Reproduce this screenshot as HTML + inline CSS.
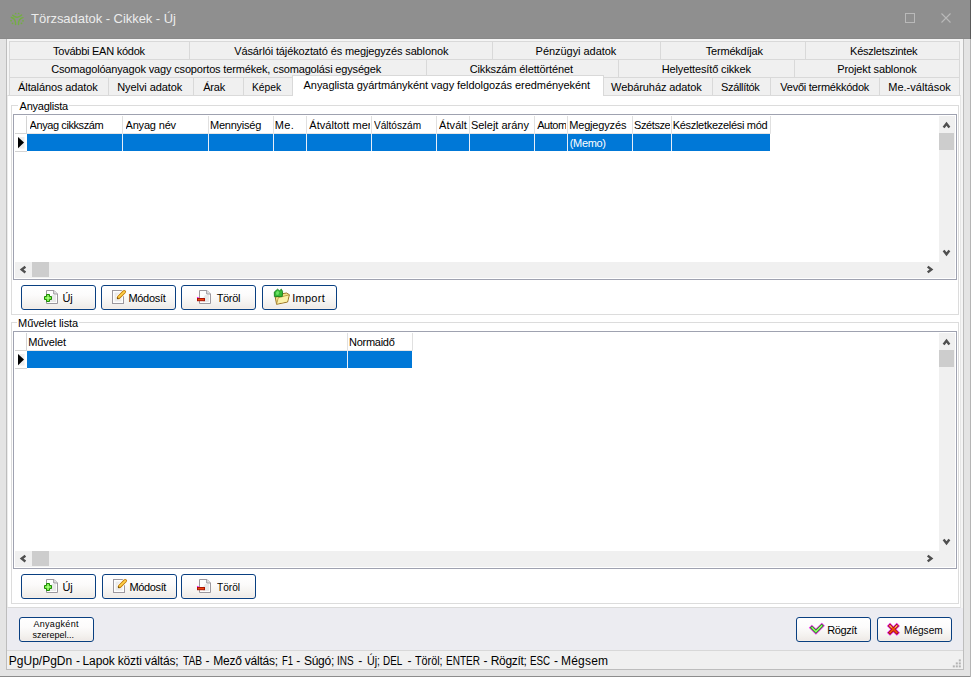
<!DOCTYPE html>
<html><head><meta charset="utf-8"><title>Törzsadatok - Cikkek - Új</title>
<style>
html,body{margin:0;padding:0}
body{width:971px;height:677px;position:relative;overflow:hidden;background:#e4e4e4;font-family:"Liberation Sans",sans-serif}
.a,.t,.tab,.btn,.hl,.vl{position:absolute}
.t{white-space:nowrap}
.tab{background:#f0f0f0;border-left:1px solid #d9d9d9;border-top:1px solid #d9d9d9;height:17px;box-sizing:content-box}
.btn{box-sizing:border-box;width:75px;height:25px;border:1px solid #093f81;border-radius:3px;background:linear-gradient(to bottom,#ffffff 0%,#fcfbfb 40%,#f4f2ef 75%,#efebe8 94%,#f8f1e8 100%)}
.hl{height:1px}.vl{width:1px}
svg{position:absolute;overflow:visible}
</style></head><body>
<!-- title bar -->
<div class="a" style="left:0;top:0;width:971px;height:39px;background:#8f8f8f"></div>
<div class="a" style="left:0;top:38px;width:971px;height:1px;background:#8a8a8a"></div>
<div class="a" style="left:970px;top:0;width:1px;height:39px;background:#5a5a5a"></div>
<svg style="left:0;top:0" width="40" height="39"><g fill="none" stroke="#74ae42" stroke-width="1.4" stroke-linecap="round">
<path d="M12.7 15.2 Q17.1 19.3 21.6 15.1"/><path d="M11.3 17.5 Q15.8 18.3 15.6 24.5"/><path d="M23 17.6 Q18.3 18.5 18.5 24.6"/></g>
<g fill="#74ae42"><circle cx="15.6" cy="13.5" r="0.85"/><circle cx="18.6" cy="13.5" r="0.85"/><circle cx="11.1" cy="20.7" r="0.9"/><circle cx="12.5" cy="23.3" r="0.9"/><circle cx="23" cy="20.8" r="0.9"/><circle cx="21.5" cy="23.3" r="0.9"/></g></svg>
<svg style="left:0;top:0" width="971" height="39"><rect x="905.5" y="13.5" width="9" height="9" fill="none" stroke="#b9b9b9" stroke-width="1"/>
<path d="M941.5 13.5 L950.5 22.5 M950.5 13.5 L941.5 22.5" stroke="#b9b9b9" stroke-width="1.1" fill="none"/></svg>
<!-- window frame -->
<div class="a" style="left:6px;top:39px;width:958px;height:631px;background:#bdbdbd"></div>
<div class="a" style="left:7px;top:39px;width:956px;height:630px;background:#f5f5f5"></div>
<div class="a" style="left:0;top:676px;width:971px;height:1px;background:#8c8c8c"></div>
<div class="a" style="left:970px;top:39px;width:1px;height:638px;background:#b4b4b4"></div>
<!-- bottom panel -->
<div class="a" style="left:7px;top:608px;width:956px;height:42px;background:#ececf1"></div>
<div class="a" style="left:7px;top:650px;width:956px;height:1px;background:#d8d8d8"></div>
<div class="a" style="left:7px;top:651px;width:956px;height:18px;background:#f0f0f0"></div>
<!-- tabs -->
<div class="a" style="left:9px;top:41px;width:950px;height:54px;background:#f0f0f0"></div>
<div class="tab" style="left:9px;top:41px;width:179px"></div><div class="tab" style="left:189px;top:41px;width:302px"></div><div class="tab" style="left:492px;top:41px;width:167px"></div><div class="tab" style="left:660px;top:41px;width:144px"></div><div class="tab" style="left:805px;top:41px;width:153px;border-right:1px solid #d9d9d9"></div>
<div class="tab" style="left:9px;top:59px;width:416px"></div><div class="tab" style="left:426px;top:59px;width:191px"></div><div class="tab" style="left:618px;top:59px;width:175px"></div><div class="tab" style="left:794px;top:59px;width:164px;border-right:1px solid #d9d9d9"></div>
<div class="tab" style="left:9px;top:77px;width:98px"></div><div class="tab" style="left:108px;top:77px;width:84px"></div><div class="tab" style="left:193px;top:77px;width:49px"></div><div class="tab" style="left:243px;top:77px;width:49px"></div><div class="tab" style="left:603px;top:77px;width:108px"></div><div class="tab" style="left:712px;top:77px;width:57px"></div><div class="tab" style="left:770px;top:77px;width:108px"></div><div class="tab" style="left:879px;top:77px;width:79px;border-right:1px solid #d9d9d9"></div>
<!-- page -->
<div class="a" style="left:7px;top:95px;width:954px;height:513px;box-sizing:border-box;border:1px solid #dadada;border-left-color:#ebebeb;border-right-color:#e6e6e6;background:#fff"></div>
<!-- active tab -->
<div class="a" style="left:292px;top:75px;width:312px;height:21px;box-sizing:border-box;border:1px solid #d9d9d9;border-bottom:none;background:#fff"></div>
<!-- group boxes -->
<div class="a" style="left:11px;top:105px;width:948px;height:210px;box-sizing:border-box;border:1px solid #dcdcdc"></div>
<div class="a" style="left:18px;top:100px;width:51px;height:12px;background:#fff"></div>
<div class="a" style="left:11px;top:322px;width:948px;height:282px;box-sizing:border-box;border:1px solid #dcdcdc"></div>
<div class="a" style="left:17px;top:317px;width:62px;height:12px;background:#fff"></div>
<!-- grid 1 -->
<div class="a" style="left:13px;top:114px;width:944px;height:166px;box-sizing:border-box;border:1px solid #9fa2b0;background:#fff"></div>
<div class="a" style="left:939px;top:116px;width:16px;height:162px;background:#f0f0f0"></div>
<div class="a" style="left:15px;top:262px;width:940px;height:16px;background:#f0f0f0"></div>
<div class="a" style="left:939px;top:133px;width:15px;height:17px;background:#cdcdcd"></div>
<div class="a" style="left:32px;top:262px;width:17px;height:15px;background:#cdcdcd"></div>
<div class="hl" style="left:15px;top:133px;width:12px;background:#d4d4d4"></div>
<div class="hl" style="left:27px;top:133px;width:744px;background:#e6e6e6"></div>
<div class="hl" style="left:15px;top:151px;width:12px;background:#d4d4d4"></div>
<div class="a" style="left:27px;top:134px;width:743px;height:17px;background:#0078d7"></div>
<div class="vl" style="left:26px;top:116px;height:17px;background:#d4d4d4"></div><div class="vl" style="left:122px;top:116px;height:17px;background:#e0e0e0"></div><div class="vl" style="left:122px;top:134px;height:17px;background:#e8eef8"></div><div class="vl" style="left:208px;top:116px;height:17px;background:#e0e0e0"></div><div class="vl" style="left:208px;top:134px;height:17px;background:#e8eef8"></div><div class="vl" style="left:273px;top:116px;height:17px;background:#e0e0e0"></div><div class="vl" style="left:273px;top:134px;height:17px;background:#e8eef8"></div><div class="vl" style="left:306px;top:116px;height:17px;background:#e0e0e0"></div><div class="vl" style="left:306px;top:134px;height:17px;background:#e8eef8"></div><div class="vl" style="left:371px;top:116px;height:17px;background:#e0e0e0"></div><div class="vl" style="left:371px;top:134px;height:17px;background:#e8eef8"></div><div class="vl" style="left:436px;top:116px;height:17px;background:#e0e0e0"></div><div class="vl" style="left:436px;top:134px;height:17px;background:#e8eef8"></div><div class="vl" style="left:469px;top:116px;height:17px;background:#e0e0e0"></div><div class="vl" style="left:469px;top:134px;height:17px;background:#e8eef8"></div><div class="vl" style="left:534px;top:116px;height:17px;background:#e0e0e0"></div><div class="vl" style="left:534px;top:134px;height:17px;background:#e8eef8"></div><div class="vl" style="left:567px;top:116px;height:17px;background:#e0e0e0"></div><div class="vl" style="left:567px;top:134px;height:17px;background:#e8eef8"></div><div class="vl" style="left:632px;top:116px;height:17px;background:#e0e0e0"></div><div class="vl" style="left:632px;top:134px;height:17px;background:#e8eef8"></div><div class="vl" style="left:671px;top:116px;height:17px;background:#e0e0e0"></div><div class="vl" style="left:671px;top:134px;height:17px;background:#e8eef8"></div><div class="vl" style="left:770px;top:116px;height:17px;background:#e0e0e0"></div>
<!-- grid 2 -->
<div class="a" style="left:13px;top:331px;width:944px;height:238px;box-sizing:border-box;border:1px solid #9fa2b0;background:#fff"></div>
<div class="a" style="left:939px;top:333px;width:16px;height:234px;background:#f0f0f0"></div>
<div class="a" style="left:15px;top:551px;width:940px;height:16px;background:#f0f0f0"></div>
<div class="a" style="left:939px;top:350px;width:15px;height:17px;background:#cdcdcd"></div>
<div class="a" style="left:32px;top:551px;width:17px;height:15px;background:#cdcdcd"></div>
<div class="hl" style="left:15px;top:350px;width:12px;background:#d4d4d4"></div>
<div class="hl" style="left:27px;top:350px;width:386px;background:#e6e6e6"></div>
<div class="hl" style="left:15px;top:368px;width:12px;background:#d4d4d4"></div>
<div class="a" style="left:27px;top:351px;width:385px;height:17px;background:#0078d7"></div>
<div class="vl" style="left:26px;top:333px;height:17px;background:#d4d4d4"></div>
<div class="vl" style="left:347px;top:333px;height:17px;background:#e0e0e0"></div><div class="vl" style="left:347px;top:351px;height:17px;background:#e8eef8"></div>
<div class="vl" style="left:412px;top:333px;height:17px;background:#e0e0e0"></div>
<svg style="left:0;top:0" width="971" height="677">
<rect x="18" y="137" width="6.5" height="11.5" fill="#eeeeee"/><path d="M18 137 L24 142.6 L18 148.2 Z" fill="#000"/>
<rect x="18" y="354" width="6.5" height="11.5" fill="#eeeeee"/><path d="M18 354 L24 359.6 L18 365.2 Z" fill="#000"/>
<g fill="none" stroke="#4f4f4f" stroke-width="2.4" stroke-linejoin="miter"><path d="M943.6 127.4 L946.5 123.7 L949.4 127.4"/><path d="M943.6 250.6 L946.5 254.3 L949.4 250.6"/><path d="M25.4 266.7 L21.7 269.6 L25.4 272.5"/><path d="M927.7 266.6 L931.4 269.5 L927.7 272.4"/><path d="M943.6 344.5 L946.5 340.8 L949.4 344.5"/><path d="M943.6 539.6 L946.5 543.3 L949.4 539.6"/><path d="M25.4 555.7 L21.7 558.6 L25.4 561.5"/><path d="M927.7 555.6 L931.4 558.5 L927.7 561.4"/></g></svg>
<!-- buttons -->
<div class="btn" style="left:21px;top:285px"></div><div class="btn" style="left:101px;top:285px"></div><div class="btn" style="left:181px;top:285px"></div><div class="btn" style="left:262px;top:285px"></div>
<div class="btn" style="left:21px;top:574px"></div><div class="btn" style="left:102px;top:574px"></div><div class="btn" style="left:181px;top:574px"></div>
<div class="btn" style="left:19px;top:617px"></div><div class="btn" style="left:796px;top:617px"></div><div class="btn" style="left:877px;top:617px"></div>
<svg style="left:0;top:0" width="971" height="677"><path d="M46.5 290.5 H54 L57.5 294 V303.5 H46.5 Z" fill="#fdfdfd" stroke="#9c989e" stroke-width="1"/><path d="M52 295 H56 V302 H50 V298 Z" fill="#e9e9e9" stroke="none"/><path d="M53.7 290.5 V294 H57.5" fill="#e6e6e6" stroke="#9c989e" stroke-width="1"/><path d="M46.5 294.5 H49.5 V296.5 H51.5 V299.5 H49.5 V301.5 H46.5 V299.5 H44.5 V296.5 H46.5 Z" fill="#84ef52" stroke="#1c8a04" stroke-width="1"/><rect x="47.2" y="297.2" width="1.6" height="1.6" fill="#b8ffa0"/><rect x="112.5" y="290.5" width="11" height="13" fill="#fdfdfd" stroke="#9c989e" stroke-width="1"/><rect x="114.5" y="292.5" width="7" height="9" fill="#ebebeb"/><path d="M118.6 297.4 L124.2 291.8" stroke="#fbfbfa" stroke-width="5.2" stroke-linecap="round"/><path d="M118.6 297.4 L124.2 291.8" stroke="#c27a08" stroke-width="3.6" stroke-linecap="round"/><path d="M118.8 297.2 L124.2 291.8" stroke="#ffd24a" stroke-width="1.8" stroke-linecap="round"/><circle cx="117.6" cy="298.4" r="0.8" fill="#6a5010"/><path d="M199.5 290.5 H207 L210.5 294 V303.5 H199.5 Z" fill="#fdfdfd" stroke="#9c989e" stroke-width="1"/><path d="M205 295 H209 V302 H203 V298 Z" fill="#e9e9e9" stroke="none"/><path d="M206.7 290.5 V294 H210.5" fill="#e6e6e6" stroke="#9c989e" stroke-width="1"/><rect x="197" y="297" width="1.6" height="1.2" fill="#ff20f0"/><rect x="197.5" y="298.5" width="7" height="2.2" fill="#f2480e" stroke="#a81404" stroke-width="1"/><path d="M275.2 297 L276.6 304.3 L287.6 302 L289.4 294.8 L286.6 293 L283 293.6 L282 295.6 Z" fill="#f4e58c" stroke="#9a7426" stroke-width="1" stroke-linejoin="round"/><path d="M276.6 304.3 L278.4 297.6 L289.4 294.8" fill="none" stroke="#b89446" stroke-width="0.9"/><path d="M278.8 298.2 L288.4 295.8 L287 301.4 L277.4 303.4 Z" fill="#fbf1a8"/><path d="M274.3 292 L276 290.6 L277.6 289.2 L279.4 290.8 L281.4 289.2 L282.6 291.6 L282.2 296.6 L274.4 296.6 Z" fill="#35ba36" stroke="#17801c" stroke-width="0.9" stroke-linejoin="round"/><path d="M276.2 292 L278 290.6 L279.2 292.4 L278.2 295 L276 294.6 Z" fill="#6ee266"/><path d="M46.5 579.5 H54 L57.5 583 V592.5 H46.5 Z" fill="#fdfdfd" stroke="#9c989e" stroke-width="1"/><path d="M52 584 H56 V591 H50 V587 Z" fill="#e9e9e9" stroke="none"/><path d="M53.7 579.5 V583 H57.5" fill="#e6e6e6" stroke="#9c989e" stroke-width="1"/><path d="M46.5 583.5 H49.5 V585.5 H51.5 V588.5 H49.5 V590.5 H46.5 V588.5 H44.5 V585.5 H46.5 Z" fill="#84ef52" stroke="#1c8a04" stroke-width="1"/><rect x="47.2" y="586.2" width="1.6" height="1.6" fill="#b8ffa0"/><rect x="113.5" y="579.5" width="11" height="13" fill="#fdfdfd" stroke="#9c989e" stroke-width="1"/><rect x="115.5" y="581.5" width="7" height="9" fill="#ebebeb"/><path d="M119.6 586.4 L125.2 580.8" stroke="#fbfbfa" stroke-width="5.2" stroke-linecap="round"/><path d="M119.6 586.4 L125.2 580.8" stroke="#c27a08" stroke-width="3.6" stroke-linecap="round"/><path d="M119.8 586.2 L125.2 580.8" stroke="#ffd24a" stroke-width="1.8" stroke-linecap="round"/><circle cx="118.6" cy="587.4" r="0.8" fill="#6a5010"/><path d="M199.5 579.5 H207 L210.5 583 V592.5 H199.5 Z" fill="#fdfdfd" stroke="#9c989e" stroke-width="1"/><path d="M205 584 H209 V591 H203 V587 Z" fill="#e9e9e9" stroke="none"/><path d="M206.7 579.5 V583 H210.5" fill="#e6e6e6" stroke="#9c989e" stroke-width="1"/><rect x="197" y="586" width="1.6" height="1.2" fill="#ff20f0"/><rect x="197.5" y="587.5" width="7" height="2.2" fill="#f2480e" stroke="#a81404" stroke-width="1"/><path d="M810.35 626.2 L815.9 631.65 L823.35 624.25" fill="none" stroke="#ee2aec" stroke-width="4.3" stroke-linejoin="miter" stroke-miterlimit="10"/><path d="M810.9 626.75 L815.9 631.65 L822.8 624.8" fill="none" stroke="#22881c" stroke-width="2.9" stroke-linejoin="miter" stroke-miterlimit="10"/><path d="M811.5 627.3 L815.9 631.65 L822.2 625.4" fill="none" stroke="#86f25e" stroke-width="1.5" stroke-linejoin="miter" stroke-miterlimit="10"/><path d="M812.2 627.6 L815.9 631.2 L821.6 625.6" fill="none" stroke="#d2ffc4" stroke-width="0.5" stroke-dasharray="0.9 0.7"/><path d="M888.45 624.35 L898.35 634.25 M898.35 624.35 L888.45 634.25" stroke="#ee1cec" stroke-width="4.4" fill="none"/><path d="M888.95 624.85 L897.85 633.75 M897.85 624.85 L888.95 633.75" stroke="#8e1a08" stroke-width="3.0" fill="none"/><path d="M889.50 625.40 L897.30 633.20 M897.30 625.40 L889.50 633.20" stroke="#f2480e" stroke-width="1.7" fill="none"/><path d="M889.50 625.40 L891.80 627.70 M897.30 625.40 L895.00 627.70" stroke="#f9a886" stroke-width="1.2" fill="none"/><rect x="958.8" y="659.4" width="2" height="2" fill="#b4b4b4"/><rect x="955.8" y="662.4" width="2" height="2" fill="#b4b4b4"/><rect x="958.8" y="662.4" width="2" height="2" fill="#b4b4b4"/><rect x="952.8" y="665.4" width="2" height="2" fill="#b4b4b4"/><rect x="955.8" y="665.4" width="2" height="2" fill="#b4b4b4"/><rect x="958.8" y="665.4" width="2" height="2" fill="#b4b4b4"/></svg>
<div class="t" style="left:53.10px;top:44.50px;font-size:11px;line-height:12px;letter-spacing:-0.256px;color:#000000">További EAN kódok</div>
<div class="t" style="left:234.30px;top:44.50px;font-size:11px;line-height:12px;letter-spacing:-0.129px;color:#000000">Vásárlói tájékoztató és megjegyzés sablonok</div>
<div class="t" style="left:535.60px;top:44.50px;font-size:11px;line-height:12px;letter-spacing:-0.043px;color:#000000">Pénzügyi adatok</div>
<div class="t" style="left:705.80px;top:44.50px;font-size:11px;line-height:12px;letter-spacing:-0.21px;color:#000000">Termékdíjak</div>
<div class="t" style="left:850.00px;top:44.50px;font-size:11px;line-height:12px;letter-spacing:-0.208px;color:#000000">Készletszintek</div>
<div class="t" style="left:51.20px;top:62.50px;font-size:11px;line-height:12px;letter-spacing:-0.162px;color:#000000">Csomagolóanyagok vagy csoportos termékek, csomagolási egységek</div>
<div class="t" style="left:469.70px;top:62.50px;font-size:11px;line-height:12px;letter-spacing:-0.12px;color:#000000">Cikkszám élettörténet</div>
<div class="t" style="left:661.80px;top:62.50px;font-size:11px;line-height:12px;letter-spacing:-0.144px;color:#000000">Helyettesítő cikkek</div>
<div class="t" style="left:837.30px;top:62.50px;font-size:11px;line-height:12px;letter-spacing:-0.133px;color:#000000">Projekt sablonok</div>
<div class="t" style="left:18.10px;top:80.50px;font-size:11px;line-height:12px;letter-spacing:-0.107px;color:#000000">Általános adatok</div>
<div class="t" style="left:117.20px;top:80.50px;font-size:11px;line-height:12px;letter-spacing:-0.075px;color:#000000">Nyelvi adatok</div>
<div class="t" style="left:203.20px;top:80.50px;font-size:11px;line-height:12px;letter-spacing:-0.167px;color:#000000">Árak</div>
<div class="t" style="left:252.37px;top:80.50px;font-size:11px;line-height:12px;color:#000000;transform:scaleX(0.9333);transform-origin:0 0">Képek</div>
<div class="t" style="left:303.60px;top:78.50px;font-size:11px;line-height:12px;letter-spacing:-0.061px;color:#000000">Anyaglista gyártmányként vagy feldolgozás eredményeként</div>
<div class="t" style="left:611.10px;top:80.50px;font-size:11px;line-height:12px;letter-spacing:-0.093px;color:#000000">Webáruház adatok</div>
<div class="t" style="left:721.10px;top:80.50px;font-size:11px;line-height:12px;letter-spacing:-0.35px;color:#000000">Szállítók</div>
<div class="t" style="left:780.30px;top:80.50px;font-size:11px;line-height:12px;letter-spacing:-0.244px;color:#000000">Vevői termékkódok</div>
<div class="t" style="left:888.20px;top:80.50px;font-size:11px;line-height:12px;letter-spacing:0.027px;color:#000000">Me.-váltások</div>
<div class="t" style="left:19.60px;top:99.50px;font-size:11px;line-height:12px;letter-spacing:-0.244px;color:#000000">Anyaglista</div>
<div class="t" style="left:18.10px;top:316.50px;font-size:11px;line-height:12px;letter-spacing:-0.092px;color:#000000">Művelet lista</div>
<div class="t" style="left:29.60px;top:118.50px;font-size:11px;line-height:12px;letter-spacing:-0.423px;color:#000000;width:91.60px;overflow:hidden">Anyag cikkszám</div>
<div class="t" style="left:125.50px;top:118.50px;font-size:11px;line-height:12px;letter-spacing:-0.175px;color:#000000;width:81.70px;overflow:hidden">Anyag név</div>
<div class="t" style="left:210.00px;top:118.50px;font-size:11px;line-height:12px;letter-spacing:-0.238px;color:#000000;width:62.20px;overflow:hidden">Mennyiség</div>
<div class="t" style="left:274.80px;top:118.50px;font-size:11px;line-height:12px;letter-spacing:0.3px;color:#000000;width:30.40px;overflow:hidden">Me.</div>
<div class="t" style="left:309.30px;top:118.50px;font-size:11px;line-height:12px;letter-spacing:0.037px;color:#000000;width:60.90px;overflow:hidden">Átváltott mennyiség</div>
<div class="t" style="left:374.10px;top:118.50px;font-size:11px;line-height:12px;color:#000000;transform:scaleX(0.9157);transform-origin:0 0;width:61.10px;overflow:hidden">Váltószám</div>
<div class="t" style="left:439.00px;top:118.50px;font-size:11px;line-height:12px;letter-spacing:0.08px;color:#000000;width:29.20px;overflow:hidden">Átvált. me.</div>
<div class="t" style="left:470.90px;top:118.50px;font-size:11px;line-height:12px;letter-spacing:0.0px;color:#000000;width:62.30px;overflow:hidden">Selejt arány</div>
<div class="t" style="left:537.20px;top:118.50px;font-size:11px;line-height:12px;letter-spacing:-0.45px;color:#000000;width:29.00px;overflow:hidden">Automatikus</div>
<div class="t" style="left:569.20px;top:118.50px;font-size:11px;line-height:12px;letter-spacing:-0.167px;color:#000000;width:62.00px;overflow:hidden">Megjegyzés</div>
<div class="t" style="left:634.00px;top:118.50px;font-size:11px;line-height:12px;letter-spacing:-0.4px;color:#000000;width:36.20px;overflow:hidden">Szétszedés</div>
<div class="t" style="left:672.70px;top:118.50px;font-size:11px;line-height:12px;letter-spacing:-0.294px;color:#000000;width:96.50px;overflow:hidden">Készletkezelési mód</div>
<div class="t" style="left:569.80px;top:136.50px;font-size:11px;line-height:12px;letter-spacing:-0.34px;color:#ffffff">(Memo)</div>
<div class="t" style="left:28.30px;top:335.50px;font-size:11px;line-height:12px;letter-spacing:-0.117px;color:#000000">Művelet</div>
<div class="t" style="left:349.00px;top:335.50px;font-size:11px;line-height:12px;letter-spacing:-0.271px;color:#000000">Normaidő</div>
<div class="t" style="left:62.50px;top:291.50px;font-size:11px;line-height:12px;letter-spacing:-0.1px;color:#000000">Új</div>
<div class="t" style="left:128.40px;top:291.50px;font-size:11px;line-height:12px;letter-spacing:-0.283px;color:#000000">Módosít</div>
<div class="t" style="left:216.70px;top:291.50px;font-size:11px;line-height:12px;letter-spacing:-0.35px;color:#000000">Töröl</div>
<div class="t" style="left:292.20px;top:291.50px;font-size:11px;line-height:12px;letter-spacing:0.28px;color:#000000">Import</div>
<div class="t" style="left:62.40px;top:580.50px;font-size:11px;line-height:12px;letter-spacing:-0.2px;color:#000000">Új</div>
<div class="t" style="left:129.50px;top:580.50px;font-size:11px;line-height:12px;letter-spacing:-0.367px;color:#000000">Módosít</div>
<div class="t" style="left:217.00px;top:580.50px;font-size:11px;line-height:12px;color:#000000;transform:scaleX(0.9208);transform-origin:0 0">Töröl</div>
<div class="t" style="left:33.40px;top:618.50px;font-size:9px;line-height:10px;letter-spacing:0.325px;color:#000000">Anyagként</div>
<div class="t" style="left:32.50px;top:629.50px;font-size:9px;line-height:10px;letter-spacing:-0.01px;color:#000000">szerepel...</div>
<div class="t" style="left:827.20px;top:623.50px;font-size:11px;line-height:12px;letter-spacing:-0.4px;color:#000000">Rögzít</div>
<div class="t" style="left:903.58px;top:623.50px;font-size:11px;line-height:12px;color:#000000;transform:scaleX(0.9171);transform-origin:0 0">Mégsem</div>
<div class="t" style="left:8.80px;top:655.00px;font-size:12px;line-height:13px;letter-spacing:0.0px;color:#000">PgUp/PgDn</div>
<div class="t" style="left:76.10px;top:655.00px;font-size:12px;line-height:13px;letter-spacing:0px;color:#000">-</div>
<div class="t" style="left:82.60px;top:655.00px;font-size:12px;line-height:13px;letter-spacing:-0.15px;color:#000">Lapok közti váltás;</div>
<div class="t" style="left:182.90px;top:655.00px;font-size:12px;line-height:13px;color:#000;transform:scaleX(0.8500);transform-origin:0 0">TAB</div>
<div class="t" style="left:205.60px;top:655.00px;font-size:12px;line-height:13px;letter-spacing:0px;color:#000">-</div>
<div class="t" style="left:213.20px;top:655.00px;font-size:12px;line-height:13px;letter-spacing:-0.227px;color:#000">Mező váltás;</div>
<div class="t" style="left:281.62px;top:655.00px;font-size:12px;line-height:13px;color:#000;transform:scaleX(0.7846);transform-origin:0 0">F1</div>
<div class="t" style="left:296.20px;top:655.00px;font-size:12px;line-height:13px;letter-spacing:0px;color:#000">-</div>
<div class="t" style="left:303.90px;top:655.00px;font-size:12px;line-height:13px;letter-spacing:-0.25px;color:#000">Súgó;</div>
<div class="t" style="left:336.97px;top:655.00px;font-size:12px;line-height:13px;color:#000;transform:scaleX(0.8316);transform-origin:0 0">INS</div>
<div class="t" style="left:358.30px;top:655.00px;font-size:12px;line-height:13px;letter-spacing:0px;color:#000">-</div>
<div class="t" style="left:366.62px;top:655.00px;font-size:12px;line-height:13px;color:#000;transform:scaleX(0.8846);transform-origin:0 0">Új;</div>
<div class="t" style="left:383.18px;top:655.00px;font-size:12px;line-height:13px;color:#000;transform:scaleX(0.8227);transform-origin:0 0">DEL</div>
<div class="t" style="left:407.40px;top:655.00px;font-size:12px;line-height:13px;letter-spacing:0px;color:#000">-</div>
<div class="t" style="left:415.30px;top:655.00px;font-size:12px;line-height:13px;color:#000;transform:scaleX(0.9000);transform-origin:0 0">Töröl;</div>
<div class="t" style="left:446.06px;top:655.00px;font-size:12px;line-height:13px;color:#000;transform:scaleX(0.8359);transform-origin:0 0">ENTER</div>
<div class="t" style="left:483.60px;top:655.00px;font-size:12px;line-height:13px;letter-spacing:0px;color:#000">-</div>
<div class="t" style="left:490.80px;top:655.00px;font-size:12px;line-height:13px;letter-spacing:-0.35px;color:#000">Rögzít;</div>
<div class="t" style="left:529.78px;top:655.00px;font-size:12px;line-height:13px;color:#000;transform:scaleX(0.8174);transform-origin:0 0">ESC</div>
<div class="t" style="left:554.00px;top:655.00px;font-size:12px;line-height:13px;letter-spacing:0px;color:#000">-</div>
<div class="t" style="left:561.00px;top:655.00px;font-size:12px;line-height:13px;letter-spacing:0.22px;color:#000">Mégsem</div>
<div class="t" style="left:31.10px;top:12.00px;font-size:13px;line-height:14px;letter-spacing:-0.046px;color:#ececec">Törzsadatok - Cikkek - Új</div>
</body></html>
